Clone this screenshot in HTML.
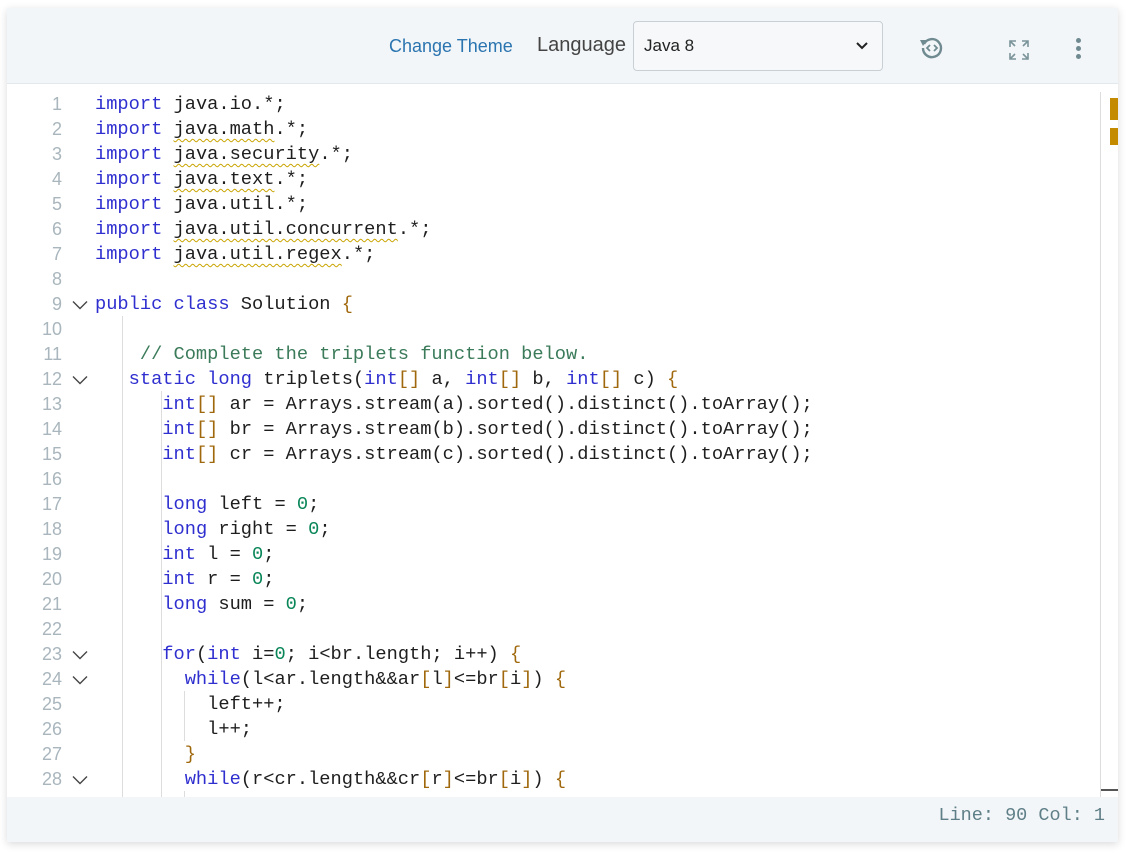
<!DOCTYPE html>
<html><head><meta charset="utf-8"><style>
body{margin:0;background:#fff;width:1131px;height:855px;overflow:hidden;font-family:"Liberation Sans",sans-serif}
.box{position:absolute;left:7px;top:8px;width:1111px;height:834px;box-shadow:0 2px 8px rgba(0,0,0,.15);background:#fff}
.hdr{position:absolute;left:0;top:0;width:1111px;height:75px;background:#f3f6f8;border-bottom:1px solid #e3e8ec}
.ft{position:absolute;left:0;top:789px;width:1111px;height:45px;background:#f3f6f8}
.ln{position:absolute;left:0;width:55px;text-align:right;font-family:"Liberation Sans",sans-serif;font-size:18px;color:#a9b6bd}
.cd{position:absolute;left:88px;white-space:pre;font-family:"Liberation Mono",monospace;font-size:18.7px;color:#1e1e1e;letter-spacing:0}
.k{color:#2f2fd0}.n{color:#098658}.c{color:#3b7b5a}.b{color:#a0680c}
.w{text-decoration:underline wavy #c9a400;text-underline-offset:4px;text-decoration-thickness:1px}
.fold{position:absolute;left:65px}
.g{position:absolute;width:1px;background:#ddd}
</style></head><body>
<div class="box">
<div class="hdr">
<div style="position:absolute;left:382px;top:28px;font-size:18px;color:#2a74b0">Change Theme</div>
<div style="position:absolute;left:530px;top:26px;font-size:20px;color:#444">Language</div>
<div style="position:absolute;left:626px;top:13px;width:248px;height:48px;border:1px solid #c8d0d6;border-radius:4px;background:#f6f8f9">
<div style="position:absolute;left:10px;top:14px;font-size:17px;color:#222">Java 8</div>
<svg style="position:absolute;left:222px;top:20px" width="12" height="8"><path d="M1 1l5 5 5-5" fill="none" stroke="#222" stroke-width="2"/></svg></div>
<svg style="position:absolute;left:912px;top:27px" width="26" height="26" viewBox="0 0 26 26"><path d="M5 9A9 9 0 1 1 4 13" fill="none" stroke="#6f8a90" stroke-width="2.4"/><path d="M1 5l7 0-4 6z" fill="#6f8a90"/><path d="M11 10l-3 3 3 3M15 10l3 3-3 3" fill="none" stroke="#6f8a90" stroke-width="1.8"/></svg>
<svg style="position:absolute;left:1001px;top:31px" width="22" height="22" viewBox="0 0 22 22" fill="none" stroke="#7a949a" stroke-width="1.6"><path d="M2 8V2h6M2 2l5 5M20 8V2h-6M20 2l-5 5M2 14v6h6M2 20l5-5M20 14v6h-6M20 20l-5-5"/></svg>
<div style="position:absolute;left:1069px;top:30px;width:5px"><div style="width:5px;height:5px;border-radius:50%;background:#6f8a90;margin-bottom:3px"></div><div style="width:5px;height:5px;border-radius:50%;background:#6f8a90;margin-bottom:3px"></div><div style="width:5px;height:5px;border-radius:50%;background:#6f8a90"></div></div>
</div>
<div style="position:absolute;left:1093px;top:84px;width:1px;height:705px;background:#ddd"></div>
<div style="position:absolute;left:1103px;top:90px;width:8px;height:22px;background:#c48a00"></div>
<div style="position:absolute;left:1103px;top:120px;width:8px;height:17px;background:#c48a00"></div>
<div style="position:absolute;left:1094px;top:781px;width:17px;height:2px;background:#555"></div>
<div class="g" style="left:115px;top:308px;height:481px"></div>
<div class="g" style="left:154px;top:383px;height:406px"></div>
<div class="g" style="left:177px;top:683px;height:50px"></div>
<div class="g" style="left:177px;top:783px;height:6px"></div>
<div id="code"></div>
<div class="ft"><div style="position:absolute;right:13px;top:8px;font-family:'Liberation Mono',monospace;font-size:18.5px;color:#5f7f88">Line: 90 Col: 1</div></div>
</div>
<script>
var L=[
'<span class="k">import</span> java.io.*;',
'<span class="k">import</span> <span class="w">java.math</span>.*;',
'<span class="k">import</span> <span class="w">java.security</span>.*;',
'<span class="k">import</span> <span class="w">java.text</span>.*;',
'<span class="k">import</span> java.util.*;',
'<span class="k">import</span> <span class="w">java.util.concurrent</span>.*;',
'<span class="k">import</span> <span class="w">java.util.regex</span>.*;',
'',
'<span class="k">public class</span> Solution <span class="b">{</span>',
'',
'    <span class="c">// Complete the triplets function below.</span>',
'   <span class="k">static long</span> triplets(<span class="k">int</span><span class="b">[]</span> a, <span class="k">int</span><span class="b">[]</span> b, <span class="k">int</span><span class="b">[]</span> c) <span class="b">{</span>',
'      <span class="k">int</span><span class="b">[]</span> ar = Arrays.stream(a).sorted().distinct().toArray();',
'      <span class="k">int</span><span class="b">[]</span> br = Arrays.stream(b).sorted().distinct().toArray();',
'      <span class="k">int</span><span class="b">[]</span> cr = Arrays.stream(c).sorted().distinct().toArray();',
'',
'      <span class="k">long</span> left = <span class="n">0</span>;',
'      <span class="k">long</span> right = <span class="n">0</span>;',
'      <span class="k">int</span> l = <span class="n">0</span>;',
'      <span class="k">int</span> r = <span class="n">0</span>;',
'      <span class="k">long</span> sum = <span class="n">0</span>;',
'',
'      <span class="k">for</span>(<span class="k">int</span> i=<span class="n">0</span>; i&lt;br.length; i++) <span class="b">{</span>',
'        <span class="k">while</span>(l&lt;ar.length&amp;&amp;ar<span class="b">[</span>l<span class="b">]</span>&lt;=br<span class="b">[</span>i<span class="b">]</span>) <span class="b">{</span>',
'          left++;',
'          l++;',
'        <span class="b">}</span>',
'        <span class="k">while</span>(r&lt;cr.length&amp;&amp;cr<span class="b">[</span>r<span class="b">]</span>&lt;=br<span class="b">[</span>i<span class="b">]</span>) <span class="b">{</span>'
];
var folds=[9,12,23,24,28],h='';
for(var i=0;i<L.length;i++){var y=84+i*25;
h+='<div class="ln" style="top:'+y+'px;height:25px;line-height:25px">'+(i+1)+'</div>';
h+='<div class="cd" style="top:'+y+'px;height:25px;line-height:25px">'+L[i]+'</div>';
if(folds.indexOf(i+1)>=0)h+='<svg class="fold" style="top:'+(y+8)+'px" width="16" height="10"><path d="M1 1.5l7 7 7-7" fill="none" stroke="#444" stroke-width="1.4"/></svg>';}
document.getElementById('code').innerHTML=h;
</script>
</body></html>
